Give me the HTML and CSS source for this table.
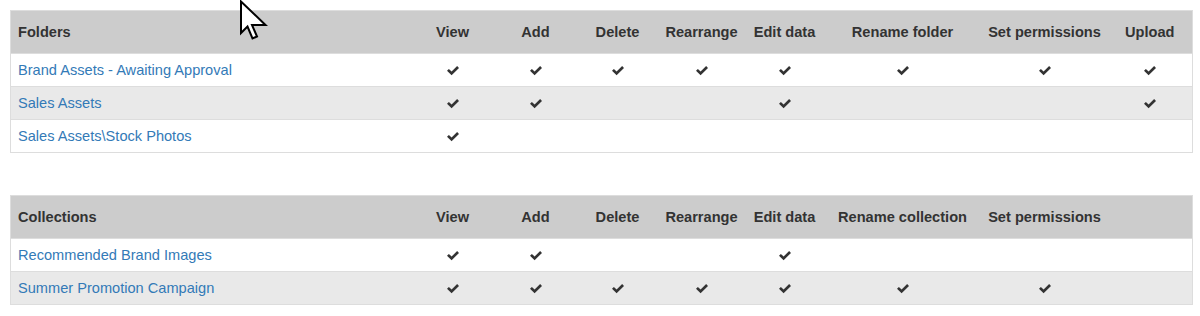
FILE: index.html
```html
<!DOCTYPE html>
<html lang="en">
<head>
<meta charset="utf-8">
<title>Permissions</title>
<link rel="stylesheet" href="styles.css">
</head>
<body>
<div class="page">
  <table class="perm">
    <colgroup>
      <col class="c-name"><col class="c-view"><col class="c-add"><col class="c-del"><col class="c-rear"><col class="c-edit"><col class="c-ren"><col class="c-set"><col class="c-up">
    </colgroup>
    <thead>
      <tr><th class="name">Folders</th><th>View</th><th>Add</th><th>Delete</th><th>Rearrange</th><th>Edit data</th><th>Rename folder</th><th>Set permissions</th><th>Upload</th></tr>
    </thead>
    <tbody>
      <tr><td class="name"><a href="#">Brand Assets - Awaiting Approval</a></td>
        <td><svg class="ok" viewBox="0 0 12 10"><polygon points="0,4.8 1.9,2.9 4.6,5.5 10.1,0 12,1.9 4.6,9.3"/></svg></td>
        <td><svg class="ok" viewBox="0 0 12 10"><polygon points="0,4.8 1.9,2.9 4.6,5.5 10.1,0 12,1.9 4.6,9.3"/></svg></td>
        <td><svg class="ok" viewBox="0 0 12 10"><polygon points="0,4.8 1.9,2.9 4.6,5.5 10.1,0 12,1.9 4.6,9.3"/></svg></td>
        <td><svg class="ok" viewBox="0 0 12 10"><polygon points="0,4.8 1.9,2.9 4.6,5.5 10.1,0 12,1.9 4.6,9.3"/></svg></td>
        <td><svg class="ok" viewBox="0 0 12 10"><polygon points="0,4.8 1.9,2.9 4.6,5.5 10.1,0 12,1.9 4.6,9.3"/></svg></td>
        <td><svg class="ok" viewBox="0 0 12 10"><polygon points="0,4.8 1.9,2.9 4.6,5.5 10.1,0 12,1.9 4.6,9.3"/></svg></td>
        <td><svg class="ok" viewBox="0 0 12 10"><polygon points="0,4.8 1.9,2.9 4.6,5.5 10.1,0 12,1.9 4.6,9.3"/></svg></td>
        <td><svg class="ok" viewBox="0 0 12 10"><polygon points="0,4.8 1.9,2.9 4.6,5.5 10.1,0 12,1.9 4.6,9.3"/></svg></td>
      </tr>
      <tr class="alt"><td class="name"><a href="#">Sales Assets</a></td>
        <td><svg class="ok" viewBox="0 0 12 10"><polygon points="0,4.8 1.9,2.9 4.6,5.5 10.1,0 12,1.9 4.6,9.3"/></svg></td>
        <td><svg class="ok" viewBox="0 0 12 10"><polygon points="0,4.8 1.9,2.9 4.6,5.5 10.1,0 12,1.9 4.6,9.3"/></svg></td>
        <td></td><td></td>
        <td><svg class="ok" viewBox="0 0 12 10"><polygon points="0,4.8 1.9,2.9 4.6,5.5 10.1,0 12,1.9 4.6,9.3"/></svg></td>
        <td></td><td></td>
        <td><svg class="ok" viewBox="0 0 12 10"><polygon points="0,4.8 1.9,2.9 4.6,5.5 10.1,0 12,1.9 4.6,9.3"/></svg></td>
      </tr>
      <tr><td class="name"><a href="#">Sales Assets\Stock Photos</a></td>
        <td><svg class="ok" viewBox="0 0 12 10"><polygon points="0,4.8 1.9,2.9 4.6,5.5 10.1,0 12,1.9 4.6,9.3"/></svg></td>
        <td></td><td></td><td></td><td></td><td></td><td></td><td></td>
      </tr>
    </tbody>
  </table>

  <table class="perm">
    <colgroup>
      <col class="c-name"><col class="c-view"><col class="c-add"><col class="c-del"><col class="c-rear"><col class="c-edit"><col class="c-ren"><col class="c-set"><col class="c-up">
    </colgroup>
    <thead>
      <tr><th class="name">Collections</th><th>View</th><th>Add</th><th>Delete</th><th>Rearrange</th><th>Edit data</th><th>Rename collection</th><th>Set permissions</th><th></th></tr>
    </thead>
    <tbody>
      <tr><td class="name"><a href="#">Recommended Brand Images</a></td>
        <td><svg class="ok" viewBox="0 0 12 10"><polygon points="0,4.8 1.9,2.9 4.6,5.5 10.1,0 12,1.9 4.6,9.3"/></svg></td>
        <td><svg class="ok" viewBox="0 0 12 10"><polygon points="0,4.8 1.9,2.9 4.6,5.5 10.1,0 12,1.9 4.6,9.3"/></svg></td>
        <td></td><td></td>
        <td><svg class="ok" viewBox="0 0 12 10"><polygon points="0,4.8 1.9,2.9 4.6,5.5 10.1,0 12,1.9 4.6,9.3"/></svg></td>
        <td></td><td></td><td></td>
      </tr>
      <tr class="alt"><td class="name"><a href="#">Summer Promotion Campaign</a></td>
        <td><svg class="ok" viewBox="0 0 12 10"><polygon points="0,4.8 1.9,2.9 4.6,5.5 10.1,0 12,1.9 4.6,9.3"/></svg></td>
        <td><svg class="ok" viewBox="0 0 12 10"><polygon points="0,4.8 1.9,2.9 4.6,5.5 10.1,0 12,1.9 4.6,9.3"/></svg></td>
        <td><svg class="ok" viewBox="0 0 12 10"><polygon points="0,4.8 1.9,2.9 4.6,5.5 10.1,0 12,1.9 4.6,9.3"/></svg></td>
        <td><svg class="ok" viewBox="0 0 12 10"><polygon points="0,4.8 1.9,2.9 4.6,5.5 10.1,0 12,1.9 4.6,9.3"/></svg></td>
        <td><svg class="ok" viewBox="0 0 12 10"><polygon points="0,4.8 1.9,2.9 4.6,5.5 10.1,0 12,1.9 4.6,9.3"/></svg></td>
        <td><svg class="ok" viewBox="0 0 12 10"><polygon points="0,4.8 1.9,2.9 4.6,5.5 10.1,0 12,1.9 4.6,9.3"/></svg></td>
        <td><svg class="ok" viewBox="0 0 12 10"><polygon points="0,4.8 1.9,2.9 4.6,5.5 10.1,0 12,1.9 4.6,9.3"/></svg></td>
        <td></td>
      </tr>
    </tbody>
  </table>
</div>
<svg class="cursor" width="30" height="42" viewBox="0 0 30 42"><polygon points="2,1.5 2,33 8.5,26.5 13.5,38.5 18,36.5 13,25 26.5,25" /></svg>
</body>
</html>
```

FILE: styles.css
```css
html, body {
  margin: 0;
  padding: 0;
  background: #fff;
}
body {
  font-family: "Liberation Sans", Arial, sans-serif;
  font-size: 14.6px;
  line-height: 20.4px;
  color: #333;
}
.page {
  padding: 10px 8px 10px 10px;
}
.perm {
  width: 1182px;
  table-layout: fixed;
  border-collapse: collapse;
  border: 1px solid #ddd;
  margin-bottom: 42px;
}
.perm:last-child { margin-bottom: 0; }
.c-name { width: 401px; }
.c-view { width: 82px; }
.c-add { width: 84px; }
.c-del { width: 80px; }
.c-rear { width: 88px; }
.c-edit { width: 78px; }
.c-ren { width: 158px; }
.c-set { width: 126px; }
.c-up { width: 85px; }

.perm th {
  background: #cccccc;
  font-weight: bold;
  color: #333;
  text-align: center;
  padding: 10.8px 0;
  white-space: nowrap;
}
.perm td {
  text-align: center;
  padding: 5.8px 0;
  border-top: 1px solid #ddd;
  white-space: nowrap;
}
.perm th.name, .perm td.name {
  text-align: left;
  padding-left: 7px;
}
.perm tr.alt td {
  background: #e9e9e9;
}
.perm a {
  color: #337ab7;
  text-decoration: none;
}
.ok {
  width: 12px;
  height: 10px;
  vertical-align: middle;
  fill: #333;
}
.cursor {
  position: absolute;
  left: 239px;
  top: 0;
}
.cursor polygon {
  fill: #fff;
  stroke: #000;
  stroke-width: 2;
  stroke-linejoin: miter;
}
```
